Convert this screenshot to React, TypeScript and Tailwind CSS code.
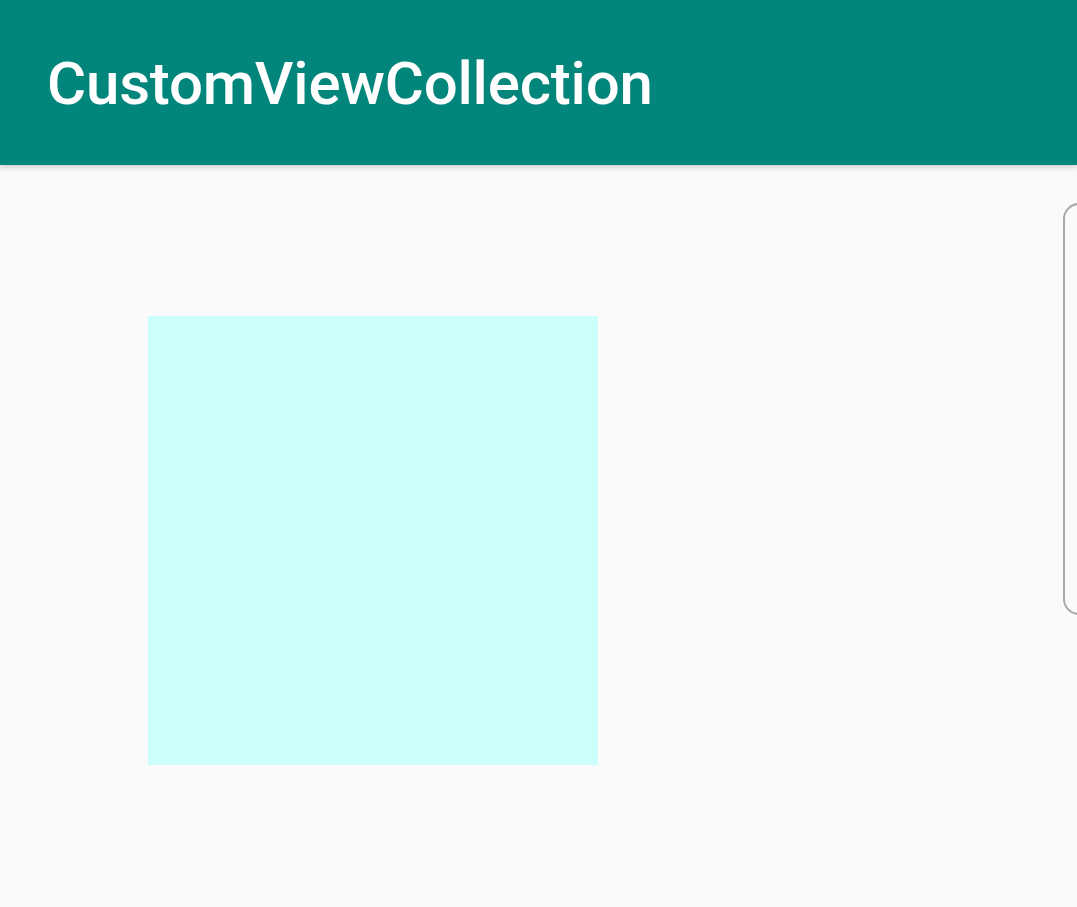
export default function App() {
  return (
    <div className="w-[1077px] h-[907px] bg-[#fafafa] overflow-hidden flex flex-col" style={{ fontFamily: 'Roboto, "Noto Sans", sans-serif' }}>
      <header className="relative z-10 h-[165px] shrink-0 bg-[#02857a] flex items-center pl-[47px] shadow-[0_2px_6px_rgba(0,0,0,0.2)]">
        <h1 className="text-white text-[60px] font-medium leading-none tracking-[-0.2px] pt-[2px]">CustomViewCollection</h1>
      </header>
      <main className="relative flex-1">
        <div className="absolute left-[148px] top-[151px] w-[450px] h-[449px] bg-[#ccfffc]" />
        <div className="absolute left-[1063px] top-[38px] w-[40px] h-[412px] rounded-[16px] border-2 border-[#a9a9a9]" />
      </main>
    </div>
  );
}
